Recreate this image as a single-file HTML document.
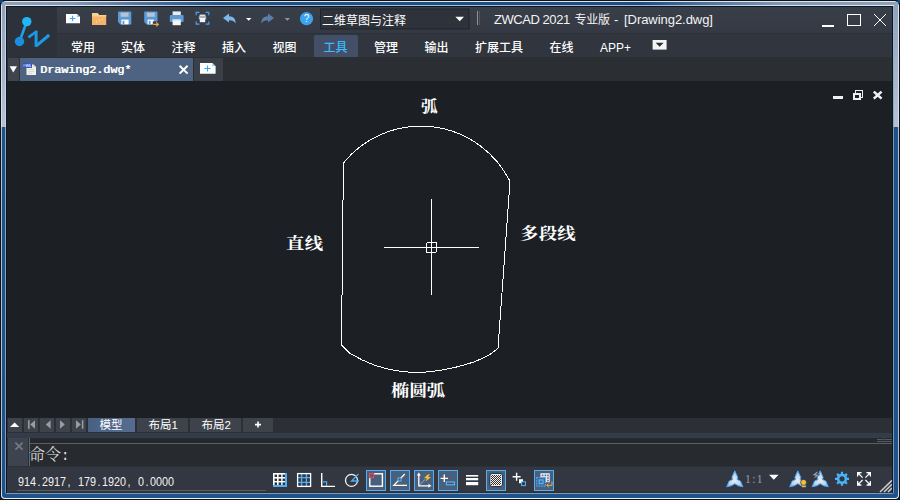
<!DOCTYPE html>
<html lang="zh-CN">
<head>
<meta charset="utf-8">
<title>ZWCAD 2021 专业版 - [Drawing2.dwg]</title>
<style>
*{margin:0;padding:0;box-sizing:border-box}
html,body{width:900px;height:500px;overflow:hidden;background:#0b121c}
body{position:relative;font-family:"Liberation Sans","Noto Sans CJK SC",sans-serif;color:#fff;font-size:12px}
.abs{position:absolute}
/* window frame */
#f0{left:0;top:0;width:900px;height:500px;background:#0b121c}
#f0c1{left:0;top:0;width:3px;height:3px;background:#0a4a80}
#f0c2{left:897px;top:0;width:3px;height:3px;background:#0a4a80}
#f1{left:1px;top:1px;width:898px;height:498px;border-radius:5px 5px 4px 4px;background:linear-gradient(180deg,#dfe6ee 0,#d6dee8 125px,#b0bed0 127px,#b0bed0 485px,#f2f2f2 497px)}
#f2{left:2px;top:2px;width:896px;height:496px;border-radius:4px 4px 3px 3px;background:#1e5288;overflow:hidden}
#f2top{left:0;top:0;width:896px;height:3px;background:linear-gradient(90deg,#8ea1b9 0,#8098b4 70px,#4f7299 140px,#1f5083 220px,#1d4d80 640px,#4f7299 700px,#8098b4 780px,#8ea1b9 896px)}
#f2l{left:0;top:0;width:3px;height:125px;background:linear-gradient(180deg,#8ea1b9,#b2c0d2 90%)}
#f2r{left:892px;top:0;width:4px;height:125px;background:linear-gradient(180deg,#8ea1b9,#b2c0d2 90%)}
#f3{left:5px;top:5px;width:889px;height:489px;border-radius:2px;background:linear-gradient(180deg,#c4d2e2 0,#c8d4e0 122px,#90a6c0 122px,#7c98ba 100%)}
#f3t{left:5px;top:5px;width:889px;height:1px;background:linear-gradient(90deg,#e0e8f0 0,#dbe4ee 100px,#a8bed6 220px,#a8bed6 650px,#dbe4ee 780px,#e0e8f0 100%)}
#f4{left:6px;top:6px;width:887px;height:487px;background:#0e1624}
#win{left:7px;top:7px;width:885px;height:486px;background:#1c2025;overflow:hidden}
/* inside #win coordinates are offset by 7 */
#pg{left:-7px;top:-7px;width:900px;height:500px}
#pg div,#pg svg,#pg span{position:absolute}
#title{left:7px;top:7px;width:886px;height:26px;background:linear-gradient(180deg,#393f49,#343943)}
#tabs{left:7px;top:33px;width:886px;height:24px;background:#30353e;border-top:1px solid #2b3039}
#appbtn{left:7px;top:7px;width:50px;height:50px;background:#2d313a}
.tt{top:11px;height:18px;line-height:18px;font-size:13px;white-space:nowrap;color:#f4f4f4}
.lb{height:20px;line-height:20px;font-family:"Liberation Serif","Noto Serif CJK SC",serif;font-weight:bold;font-size:17px;white-space:nowrap;color:#fff;letter-spacing:0.3px;transform-origin:0 0;transform:scale(1.08,0.94)}
.lt{top:417.5px;height:15px;line-height:15px;font-size:11.5px;white-space:nowrap;color:#fff;font-family:"Liberation Sans","Noto Sans CJK SC",sans-serif}
.sb{top:470px;width:20px;height:21px;background:#4a5f7c;border:1px solid #4fb0f6}
#coords i{position:static;display:inline-block;width:6.95px;font-style:normal;text-align:center;white-space:pre}
.rt{top:40px;font-weight:500;height:16px;line-height:16px;font-size:12px;color:#fff;white-space:nowrap}
#doctabs{left:7px;top:57px;width:886px;height:24px;background:#2b2e33}
#layouttabs{left:7px;top:418px;width:886px;height:15px;background:#2c3036}
#cmdband{left:7px;top:433px;width:886px;height:5px;background:#343c49}
#cmd{left:7px;top:438px;width:886px;height:29px;background:#2a2e33}
#status{left:7px;top:467px;width:886px;height:26px;background:#323741;border-bottom:1px solid #2a2f38}
</style>
</head>
<body>
<div class="abs" id="f0"></div>
<div class="abs" id="f0c1"></div><div class="abs" id="f0c2"></div>
<div class="abs" id="f1"></div>
<div class="abs" id="f2"><div class="abs" id="f2top"></div><div class="abs" id="f2l"></div><div class="abs" id="f2r"></div></div>
<div class="abs" id="f3"></div>
<div class="abs" id="f3t"></div>
<div class="abs" style="left:893px;top:6px;width:1px;height:487px;background:linear-gradient(180deg,#9ab4d0 0,#8aa8c8 121px,#7b96b6 121px,#7b96b6 100%)"></div>
<div class="abs" id="f4"></div>
<div class="abs" id="win"><div class="abs" id="pg">
<div id="title"></div>
<div id="tabs"></div>
<div id="appbtn"></div>
<svg style="left:0;top:0" width="900" height="60" viewBox="0 0 900 60">
<!-- logo -->
<line x1="26.8" y1="21.6" x2="19.5" y2="41.5" stroke="#1da2ec" stroke-width="2.6"/>
<circle cx="26.8" cy="21.6" r="4.7" fill="#20b7f6"/>
<circle cx="19.5" cy="41.5" r="4.7" fill="#1c8ee2"/>
<path d="M36.1 30.6 V46.8" fill="none" stroke="#1a9be8" stroke-width="3"/><path d="M28.4 37.4 L35.4 32.2" fill="none" stroke="#1a9be8" stroke-width="2.6"/><path d="M36.6 45.6 L49.2 35" fill="none" stroke="#1a9be8" stroke-width="3"/>
<!-- new -->
<path d="M66 14 H77 L80 17 V23.2 H66 Z" fill="#fff"/>
<path d="M77 14 L80 17 H77 Z" fill="#8cc8f4"/>
<path d="M69.8 18.5 H75.4 M72.6 15.7 V21.3" stroke="#3aa8f4" stroke-width="1.1" fill="none"/>
<!-- open -->
<path d="M92 13 H97.6 L99 15 H106.2 V25 H92 Z" fill="#f4b469"/>
<path d="M92 13 H97.6 L99 15 H106.2 V16.6 H92 Z" fill="#f9d08f"/>
<path d="M96 21.6 h1.2 M99 20.4 h1.2 M102 19.2 h1.2" stroke="#fbe0b8" stroke-width="1.1"/>
<!-- save -->
<g id="sv">
<path d="M118 12.6 a1 1 0 0 1 1 -1 H130.3 a1 1 0 0 1 1 1 V24.4 H120.4 L118 22 Z" fill="#5b9bd5"/>
<rect x="120.6" y="12.6" width="8" height="4.2" fill="#b4c3d6"/>
<rect x="121.4" y="19.6" width="7.2" height="4.8" fill="#fff"/>
<rect x="122.6" y="20.8" width="1.8" height="3.6" fill="#5b9bd5"/>
</g>
<!-- save as -->
<g transform="translate(26.2 0)">
<path d="M118 12.6 a1 1 0 0 1 1 -1 H130.3 a1 1 0 0 1 1 1 V24.4 H120.4 L118 22 Z" fill="#5b9bd5"/>
<rect x="120.6" y="12.6" width="8" height="4.2" fill="#b4c3d6"/>
<rect x="121.4" y="19.6" width="6.2" height="4.8" fill="#fff"/>
<rect x="122.6" y="20.8" width="1.8" height="3.6" fill="#5b9bd5"/>
<rect x="126.6" y="21.4" width="6" height="4.6" fill="#363b45"/>
<path d="M127 24.4 H132 M130 22.4 L132.2 24.4 L130 26.4" stroke="#f0a848" stroke-width="1.1" fill="none"/>
</g>
<!-- print -->
<rect x="172.6" y="11.4" width="8.2" height="4.4" fill="#e8edf2"/>
<rect x="169.8" y="15" width="13.8" height="7" rx="1" fill="#5b9bd5"/>
<rect x="172.6" y="19.4" width="8.2" height="5.8" fill="#f4f6f8"/>
<rect x="172.6" y="19.4" width="8.2" height="1" fill="#c8d2dc"/>
<!-- plot preview -->
<path d="M196.2 15.2 V12.3 H199.4 M205.6 12.3 H208.8 V15.2 M208.8 21.4 V24.2 H205.6 M199.4 24.2 H196.2 V21.4" fill="none" stroke="#4aa3ee" stroke-width="1.2"/>
<rect x="199.6" y="14.6" width="5.8" height="2" fill="#dfe6ee"/>
<rect x="198.8" y="16.2" width="7.4" height="3.2" fill="#aab6c4"/>
<rect x="199.8" y="18" width="5.4" height="4.2" fill="#f2f4f6"/>
<!-- undo -->
<path d="M223 18 L229 13.6 V16.2 C233.4 16.2 235.8 19 235.6 23.4 C234.2 21 232.4 20.2 229 20.2 V22.6 Z" fill="#7fb6e8"/>
<path d="M246 18 H251.4 L248.7 20.8 Z" fill="#fff"/>
<!-- redo -->
<path d="M274 18 L268 13.6 V16.2 C263.6 16.2 261.2 19 261.4 23.4 C262.8 21 264.6 20.2 268 20.2 V22.6 Z" fill="#5a7eac"/>
<path d="M284.6 18 H290 L287.3 20.8 Z" fill="#8f949c"/>
<!-- help -->
<circle cx="306.5" cy="18.7" r="6.6" fill="#3aa2ef"/>
<text x="306.5" y="22.2" font-family="Liberation Sans" font-size="10" fill="#fff" text-anchor="middle">?</text>
<!-- workspace -->
<rect x="320.5" y="9" width="148.5" height="20" fill="#2e323a" stroke="#202329" stroke-width="1"/>
<path d="M455.4 16.8 H464 L459.7 21.2 Z" fill="#fff"/>
<!-- sep -->
<rect x="477" y="11" width="1" height="14" fill="#8d929a"/>
<rect x="479" y="11" width="1" height="14" fill="#50555e"/>
<!-- win controls -->
<rect x="822" y="25" width="12" height="2" fill="#fff"/>
<rect x="847.5" y="14.5" width="13" height="11" fill="none" stroke="#fff" stroke-width="1"/>
<path d="M874 14 L886 26 M886 14 L874 26" stroke="#fff" stroke-width="1" fill="none"/>
<!-- ribbon active tab -->
<path d="M314 57 V37 a2 2 0 0 1 2 -2 H356 a2 2 0 0 1 2 2 V57 Z" fill="#434f67"/>
<!-- ribbon minimize button -->
<rect x="652.6" y="40" width="14" height="9.6" fill="#f4f4f4"/>
<path d="M655.6 42.8 H663.6 L659.6 46.8 Z" fill="#2a2e36"/>
</svg>
<div id="wstext" style="left:322px;top:12.5px;height:16px;line-height:16px;font-size:12px;white-space:nowrap">二维草图与注释</div>
<div class="tt" id="t1" style="left:494px;letter-spacing:-0.45px">ZWCAD 2021</div>
<div class="tt" id="t2" style="left:574.5px;font-size:12px;letter-spacing:-0.3px">专业版</div>
<div class="tt" id="t3" style="left:614px">-</div>
<div class="tt" id="t4" style="left:624px;letter-spacing:-0.05px">[Drawing2.dwg]</div>
<div class="rt" style="left:71px">常用</div>
<div class="rt" style="left:121px">实体</div>
<div class="rt" style="left:171.5px">注释</div>
<div class="rt" style="left:222px">插入</div>
<div class="rt" style="left:272.5px">视图</div>
<div class="rt" style="left:323.5px;color:#38bcfc">工具</div>
<div class="rt" style="left:374px">管理</div>
<div class="rt" style="left:424.5px">输出</div>
<div class="rt" style="left:475px">扩展工具</div>
<div class="rt" style="left:549.5px">在线</div>
<div class="rt" id="appp" style="left:600px">APP+</div>

<div id="doctabs"></div>
<div style="left:8px;top:58px;width:11px;height:23px;background:#40444c"></div>
<div style="left:20px;top:58px;width:173px;height:23px;background:#4e6381"></div>
<div style="left:194px;top:58px;width:29px;height:23px;background:#3b3f47"></div>
<svg style="left:0;top:54px" width="240" height="30" viewBox="0 54 240 30">
<path d="M9.6 66.2 H17 L13.3 72.6 Z" fill="#fff"/>
<!-- dwg icon -->
<path d="M26.5 64.5 H33.5 L36 67 V75 H26.5 Z" fill="#f3f1ec"/>
<path d="M33.5 64.5 L36 67 H33.5 Z" fill="#c9c6be"/>
<path d="M28 69.5 H34 M28 71.5 H34 M28 73.4 H32" stroke="#d4d0c8" stroke-width="0.8"/>
<rect x="23" y="63" width="9" height="5" fill="#2f55c8"/>
<path d="M24 64.2 v2.6 M25.6 64.2 l0.8 2.6 l0.8 -2.6 l0.8 2.6 l0.8 -2.6 M30.6 64.2 h-1 v2.6 h1 v-1.2" stroke="#dfe6ff" stroke-width="0.7" fill="none"/>
<!-- close -->
<path d="M179.6 65.8 L187.6 73.6 M187.6 65.8 L179.6 73.6" stroke="#fff" stroke-width="2" fill="none"/>
<!-- new -->
<path d="M200 63 H212.4 L215.6 66.2 V73.8 H200 Z" fill="#fff"/>
<path d="M212.4 63 L215.6 66.2 H212.4 Z" fill="#8cc8f4"/>
<path d="M204.4 68.5 H210.6 M207.5 65.4 V71.6" stroke="#3aa8f4" stroke-width="1.1" fill="none"/>
</svg>
<div id="dname" style="left:40px;top:61px;height:18px;line-height:18px;font-family:'Liberation Mono',monospace;font-weight:normal;text-shadow:0.7px 0 0 #fff;font-size:11.7px;white-space:nowrap;color:#fff">Drawing2.dwg*</div>

<svg style="left:0;top:81px" width="900" height="337" viewBox="0 81 900 337" shape-rendering="crispEdges">
<g fill="none" stroke="#fff" stroke-width="1">
<path d="M343.4 163 A99.6 99.6 0 0 1 510 181.5"/>
<path d="M343.4 163 L341.5 345"/>
<path d="M510 181.5 L498 348.4"/>
<path d="M341.5 345 L350 353.4 Q362 360.6 375 365.4 Q385 368.6 395 370.5 Q406 372.3 417.5 372.5 Q426 372.3 435 371 Q445 369.8 455 367.4 Q465 365 475 361.6 Q483 358.2 491 353.8 L498 348.4"/>
<path d="M384 247.5 H479 M431.5 199 V295"/>
<rect x="426.5" y="242.5" width="10" height="10" rx="1.5"/>
</g>
<!-- mdi controls -->
<rect x="833" y="96" width="10" height="3" fill="#f0f0f0"/>
<path d="M855.5 93 V90.5 H862.5 V97.5 H860" fill="none" stroke="#f0f0f0" stroke-width="1.4"/>
<rect x="853.8" y="93.8" width="6.4" height="5.4" fill="none" stroke="#f0f0f0" stroke-width="2"/>
<path d="M873.8 91.6 L881.6 98.6 M881.6 91.6 L873.8 98.6" stroke="#f0f0f0" stroke-width="2.6" fill="none" shape-rendering="auto"/>
</svg>
<div class="lb" style="left:421.3px;top:98px;transform:scale(0.98,0.94)">弧</div>
<div class="lb" style="left:285.7px;top:235px">直线</div>
<div class="lb" style="left:520px;top:224.5px">多段线</div>
<div class="lb" style="left:391px;top:381.5px;letter-spacing:-0.4px">椭圆弧</div>

<div id="layouttabs"></div>
<div style="left:8px;top:418px;width:14px;height:14px;background:#3d424b"></div>
<div style="left:24px;top:418px;width:14px;height:14px;background:#3d424b"></div>
<div style="left:40px;top:418px;width:14px;height:14px;background:#3d424b"></div>
<div style="left:56px;top:418px;width:14px;height:14px;background:#3d424b"></div>
<div style="left:72px;top:418px;width:14px;height:14px;background:#3d424b"></div>
<div style="left:88px;top:418px;width:47px;height:14px;background:linear-gradient(90deg,#4a6080,#556d90)"></div>
<div style="left:137px;top:418px;width:51px;height:14px;background:#3d424b"></div>
<div style="left:190px;top:418px;width:51px;height:14px;background:#3d424b"></div>
<div style="left:243px;top:418px;width:30px;height:14px;background:#3d424b"></div>
<svg style="left:0;top:414px" width="300" height="22" viewBox="0 414 300 22">
<path d="M10 427 H19.2 L14.6 422.4 Z" fill="#fff"/>
<g fill="#979da6">
<rect x="28" y="420.2" width="1.6" height="8.6"/><path d="M35 420.2 V428.8 L30.2 424.5 Z"/>
<path d="M50.6 420.2 V428.8 L45.8 424.5 Z"/>
<path d="M60 420.2 V428.8 L64.8 424.5 Z"/>
<path d="M76 420.2 V428.8 L80.8 424.5 Z"/><rect x="81.8" y="420.2" width="1.6" height="8.6"/>
</g>
<path d="M255 424.6 H261 M258 421.6 V427.6" stroke="#fff" stroke-width="1.6" fill="none"/>
</svg>
<div class="lt" style="left:99.5px">模型</div>
<div class="lt" style="left:148.5px">布局1</div>
<div class="lt" style="left:201.5px">布局2</div>

<div id="cmdband"></div>
<div id="cmd"></div>
<div style="left:8px;top:438px;width:20px;height:28px;background:#3e444f"></div>
<div style="left:29px;top:438px;width:1px;height:28px;background:#626870"></div>
<div style="left:30px;top:438px;width:863px;height:5px;background:#25282d"></div>
<div style="left:30px;top:443px;width:863px;height:1px;background:#585e66"></div>
<div style="left:30px;top:444px;width:863px;height:22px;background:#272b2f"></div>
<div style="left:7px;top:466px;width:886px;height:1px;background:#2c3037"></div>
<svg style="left:0;top:436px" width="900" height="32" viewBox="0 436 900 32">
<path d="M15.4 442.6 L22.6 449.6 M22.6 442.6 L15.4 449.6" stroke="#747a84" stroke-width="1.7" fill="none"/>
<g stroke="#565b63" stroke-width="1" shape-rendering="crispEdges"><path d="M877 439.5 H892 M877 441.5 H892"/><path d="M884.5 438 V443" stroke="#3a3e45"/></g>
</svg>
<div id="cmdt" style="left:29px;top:445px;height:20px;line-height:20px;font-family:'Liberation Serif','Noto Serif CJK SC',serif;font-weight:300;font-size:16px;color:#e4e4e4;white-space:nowrap">命令<span style="position:static;font-family:'Liberation Mono',monospace;font-size:14px;letter-spacing:0">:</span></div>

<div id="status"></div>
<div style="left:17px;top:490px;width:249px;height:1px;background:#565c66"></div>
<div id="coords" style="left:17.5px;top:474px;height:16px;line-height:16px;font-family:'Liberation Sans',sans-serif;font-size:12.5px;white-space:nowrap;color:#f2f2f2;transform-origin:0 0;transform:scaleX(0.863)">914<i>.</i>2917<i>,</i><i> </i>179<i>.</i>1920<i>,</i><i> </i>0<i>.</i>0000</div>
<div class="sb" style="left:366px"></div>
<div class="sb" style="left:390px"></div>
<div class="sb" style="left:414px"></div>
<div class="sb" style="left:438px"></div>
<div class="sb" style="left:486px"></div>
<div class="sb" style="left:534px"></div>
<svg style="left:0;top:466px" width="900" height="30" viewBox="0 466 900 30">
<!-- 1 grid -->
<rect x="273" y="473" width="13" height="13" fill="#fff"/>
<rect x="285" y="473" width="2" height="14" fill="#4fb0f6"/><rect x="273" y="485" width="14" height="2" fill="#4fb0f6"/>
<g fill="#2c313a"><rect x="274.6" y="474.6" width="2.4" height="2.4"/><rect x="278.6" y="474.6" width="2.6" height="2.4"/><rect x="282.6" y="474.6" width="2.4" height="2.4"/>
<rect x="274.6" y="478.6" width="2.4" height="2.4"/><rect x="278.6" y="478.6" width="2.6" height="2.4"/><rect x="282.6" y="478.6" width="2.4" height="2.4"/>
<rect x="274.6" y="482.4" width="2.4" height="2.6"/><rect x="278.6" y="482.4" width="2.6" height="2.6"/><rect x="282.6" y="482.4" width="2.4" height="2.6"/></g>
<!-- 2 snap -->
<path d="M301.6 473.5 V486.5 M306.4 473.5 V486.5 M297.5 477.6 H310.5 M297.5 482.4 H310.5" stroke="#4fb0f6" stroke-width="1.4" fill="none"/>
<rect x="297.6" y="473.6" width="13" height="12.8" fill="none" stroke="#fff" stroke-width="1.3"/>
<!-- 3 ortho -->
<path d="M322.8 481.8 H326.6 V486" stroke="#4fb0f6" stroke-width="1.2" fill="none"/>
<path d="M321.7 473 V486.4 H335" stroke="#fff" stroke-width="1.4" fill="none"/>
<!-- 4 polar -->
<circle cx="351.5" cy="480.4" r="6" fill="none" stroke="#f0f0f0" stroke-width="1.3"/>
<path d="M358.4 474 L351.6 481 H359" stroke="#4fb0f6" stroke-width="1.3" fill="none"/>
<!-- 5 osnap -->
<rect x="369.8" y="473.8" width="12.6" height="12.4" fill="none" stroke="#fff" stroke-width="1.4"/>
<rect x="369.6" y="473.6" width="4" height="4" fill="#4a5f7c" stroke="#e8484a" stroke-width="1.2"/>
<!-- 6 -->
<path d="M404.8 474 L393.8 485.4 H407" stroke="#fff" stroke-width="1.3" fill="none"/>
<rect x="398" y="478" width="3" height="3" fill="#4a5f7c" stroke="#5bb8f8" stroke-width="1"/>
<!-- 7 -->
<path d="M418.8 474 V485.8 H430" stroke="#fff" stroke-width="1.3" fill="none"/>
<path d="M418.8 472.6 L416.8 475.6 H420.8 Z M431.4 485.8 L428.4 483.8 V487.8 Z" fill="#fff"/>
<path d="M420 484.6 L425 479.4" stroke="#dfe4ea" stroke-width="1" stroke-dasharray="1.5 1.2" fill="none"/>
<path d="M427.6 474.6 L424 478.2 H427 L425.6 481.4 L431 477 H428 L430 474.6 Z" fill="#f7c52e"/>
<!-- 8 -->
<path d="M440.6 478.4 H448 M444.3 474.6 V482" stroke="#fff" stroke-width="1.4" fill="none"/>
<rect x="446.4" y="482" width="8" height="2.8" fill="#3f5574" stroke="#5bb8f8" stroke-width="1.1"/>
<!-- 9 lineweight -->
<rect x="466" y="475" width="12.2" height="1.6" fill="#fff"/><rect x="466" y="478" width="12.2" height="2.3" fill="#fff"/><rect x="466" y="482" width="12.2" height="3.2" fill="#fff"/>
<!-- 10 transparency -->
<pattern id="chk" x="490" y="473" width="2" height="2" patternUnits="userSpaceOnUse"><rect width="2" height="2" fill="#f4f4f4"/><rect width="1" height="1" fill="#303030"/><rect x="1" y="1" width="1" height="1" fill="#303030"/></pattern>
<rect x="489.8" y="473.4" width="12.8" height="13.2" rx="2.6" fill="#e8e8e8" stroke="#26292e" stroke-width="1"/><rect x="491" y="475" width="10" height="10" fill="url(#chk)" shape-rendering="crispEdges"/>
<!-- 11 -->
<path d="M512.6 476.8 H520.6 M516.6 472.8 V480.8" stroke="#fff" stroke-width="1.4" fill="none"/>
<rect x="519" y="479.2" width="4" height="4" fill="#fff"/>
<rect x="521.6" y="481.8" width="3.8" height="3.8" fill="#2c3340" stroke="#5bb8f8" stroke-width="1"/>
<!-- 12 -->
<rect x="540.4" y="473.2" width="9.4" height="9" fill="#e8ecf2"/>
<g fill="#5a6c88"><rect x="541.8" y="474.6" width="1.6" height="1.6"/><rect x="544.6" y="474.6" width="1.6" height="1.6"/><rect x="547.2" y="474.6" width="1.6" height="1.6"/><rect x="547.2" y="477.2" width="1.6" height="1.6"/><rect x="547.2" y="479.8" width="1.6" height="1.6"/></g>
<rect x="536.6" y="477.4" width="9" height="8.8" fill="#4a6a94" stroke="#4fb0f6" stroke-width="1" stroke-dasharray="1.6 1"/>
<rect x="539.2" y="480" width="3.8" height="3.6" fill="none" stroke="#4fb0f6" stroke-width="1.3"/>
<path d="M552 481.6 V485.4 H547 M548.8 483.4 L546.8 485.4 L548.8 487.4" stroke="#f0a848" stroke-width="1" fill="none"/>
<!-- right -->
<radialGradient id="sg" cx="0.5" cy="0.6" r="0.6"><stop offset="0" stop-color="#e6ecf2"/><stop offset="0.6" stop-color="#c4d4e6"/><stop offset="1" stop-color="#6ab8f8"/></radialGradient>
<path d="M0 -8.2 L2.9 -1.7 L2.2 0.4 L5.6 2 L8.1 7.8 L3.6 6.8 L0 4.7 L-3.6 6.8 L-8.1 7.8 L-5.6 2 L-2.2 0.4 L-2.9 -1.7 Z" transform="translate(734.8 479)" fill="url(#sg)" stroke="#4aa8f8" stroke-width="1" stroke-linejoin="round"/>
<path d="M769 474.8 H778.6 L773.8 479.8 Z" fill="#fff"/>
<path d="M0 -8.2 L2.9 -1.7 L2.2 0.4 L5.6 2 L8.1 7.8 L3.6 6.8 L0 4.7 L-3.6 6.8 L-8.1 7.8 L-5.6 2 L-2.2 0.4 L-2.9 -1.7 Z" transform="translate(797.8 479)" fill="url(#sg)" stroke="#4aa8f8" stroke-width="1" stroke-linejoin="round"/>
<circle cx="803.6" cy="482.4" r="3" fill="#f8c22e" stroke="#1c2440" stroke-width="0.7"/><rect x="801.9" y="485.9" width="3.4" height="1.3" fill="#f8c22e"/>
<path d="M0 -8.2 L2.9 -1.7 L2.2 0.4 L5.6 2 L8.1 7.8 L3.6 6.8 L0 4.7 L-3.6 6.8 L-8.1 7.8 L-5.6 2 L-2.2 0.4 L-2.9 -1.7 Z" transform="translate(820.2 479)" fill="url(#sg)" stroke="#4aa8f8" stroke-width="1" stroke-linejoin="round"/>
<path d="M816.8 471.8 L811.8 475.5 H815.4 L813.6 479 L819.8 474.6 H816.2 L818.4 471.8 Z" fill="#a4acb8" stroke="#323741" stroke-width="0.5"/>
<!-- gear -->
<g transform="translate(842 478.8)">
<circle r="3.9" fill="none" stroke="#4ab4f8" stroke-width="2.6"/>
<g stroke="#4ab4f8" stroke-width="2.2"><path d="M0 -7 V-4.4 M0 7 V4.4 M-7 0 H-4.4 M7 0 H4.4 M-4.95 -4.95 L-3.2 -3.2 M4.95 4.95 L3.2 3.2 M-4.95 4.95 L-3.2 3.2 M4.95 -4.95 L3.2 -3.2"/></g>
</g>
<!-- fullscreen -->
<g stroke="#fff" stroke-width="1.2" fill="none">
<path d="M857.6 476.6 V472.6 H861.6 M866.4 472.6 H870.4 V476.6 M870.4 481 V485 H866.4 M861.6 485 H857.6 V481"/>
<path d="M858 473 L862.6 477.6 M870 473 L865.4 477.6 M858 484.6 L862.6 480 M870 484.6 L865.4 480"/>
</g>
<path d="M857 472 H861.4 L857 476.4 Z M871 472 V476.4 L866.6 472 Z M857 485.6 V481.2 L861.4 485.6 Z M871 485.6 H866.6 L871 481.2 Z" fill="#fff"/>
<!-- grip -->
<g stroke="#c8ccd2" stroke-width="1.5"><path d="M880 492 L892 480.4 M884 492 L892 484.2 M888 492 L892 488"/></g>
</svg>
<div id="sc" style="left:745px;top:471px;height:16px;line-height:16px;font-family:'Liberation Serif',serif;font-size:11.5px;letter-spacing:1.4px;color:#9a9fa8;white-space:nowrap">1:1</div>

</div></div>
</body>
</html>
